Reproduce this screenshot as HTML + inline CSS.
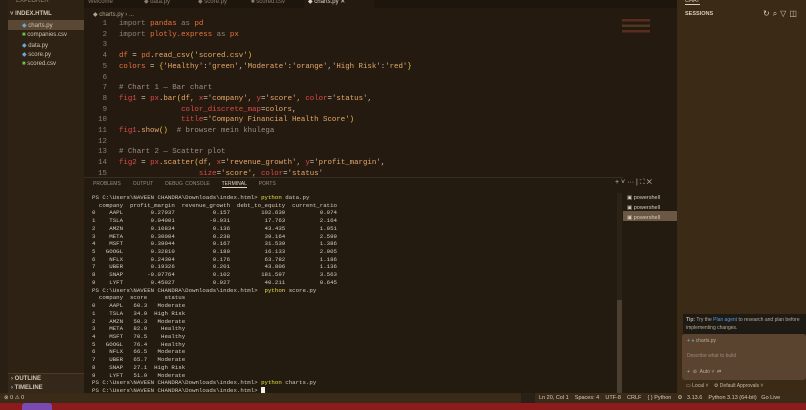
<!DOCTYPE html>
<html><head><style>
*{margin:0;padding:0;box-sizing:border-box}
body{width:806px;height:410px;overflow:hidden;background:#241a10;font-family:"Liberation Sans",sans-serif;position:relative}
.abs{position:absolute}
.mono{font-family:"Liberation Mono",monospace;white-space:pre}
#act{left:0;top:0;width:8px;height:393px;background:#2a1f13}
#side{left:8px;top:0;width:76px;height:393px;background:#2e2214;color:#cfc3b0;font-size:6px}
#side .f{position:absolute;left:14px}
#tabs{left:84px;top:0;width:593px;height:8px;background:#1e160d}
.tab{position:absolute;top:0;height:8px;font-size:6px;color:#8a7d6c;line-height:5px}
#code{left:84px;top:19px;font-size:7.4px;line-height:10.7px;color:#d4c8b4}
.ln{display:inline-block;width:23px;text-align:right;color:#8a7f70;margin-right:12px}
.k{color:#8f8474}.m{color:#e8743b}.s{color:#e6a96a}.o{color:#e04a4a}.c{color:#9b8f7f}.p{color:#f0c040}.g{color:#4ec94e}
#term{left:84px;top:177px;width:539px;height:216px;background:#231a10;border-top:1px solid #3a2d1e}
#tl{left:92px;top:194px;font-size:5.75px;line-height:7.72px;color:#d8ccb8}
.y{color:#e8e040}
#chat{left:677px;top:0;width:129px;height:393px;background:#3b2a16}
#status{left:0;top:393px;width:806px;height:10px;background:#3a2a18;color:#d8ccb8;font-size:5.5px;line-height:10px}
#task{left:0;top:403px;width:806px;height:7px;background:#8e1b1b}
</style></head><body>
<div id="act" class="abs"></div>
<div id="side" class="abs">
 <div class="abs" style="left:8px;top:-2px;color:#9a8e7c">EXPLORER</div>
 <div class="abs" style="left:2px;top:11px;font-weight:bold">˅ INDEX.HTML</div>
 <div class="abs" style="left:0;top:20px;width:76px;height:10px;background:#5a4834"></div>
 <div class="f" style="top:22px"><span style="color:#6aa6d8">◆</span> charts.py</div>
 <div class="f" style="top:32px"><span style="color:#6cc04a">■</span> companies.csv</div>
 <div class="f" style="top:42px"><span style="color:#6aa6d8">◆</span> data.py</div>
 <div class="f" style="top:51px"><span style="color:#6aa6d8">◆</span> score.py</div>
 <div class="f" style="top:61px"><span style="color:#6cc04a">■</span> scored.csv</div>
 <div class="abs" style="left:0;top:373px;width:76px;height:20px;background:#34281a;border-top:1px solid #4a3a28"></div>
 <div class="abs" style="left:3px;top:376px;font-weight:bold">› OUTLINE</div>
 <div class="abs" style="left:3px;top:385px;font-weight:bold">› TIMELINE</div>
</div>
<div id="tabs" class="abs">
 <div class="tab" style="left:4px">Welcome</div>
 <div class="tab" style="left:60px">◆ data.py</div>
 <div class="tab" style="left:114px">◆ score.py</div>
 <div class="tab" style="left:167px">■ scored.csv</div>
 <div class="abs" style="left:220px;top:0;width:70px;height:8px;background:#241a10"></div>
 <div class="tab" style="left:224px;color:#e0d4c0">◆ charts.py ✕</div>
</div>
<div class="abs" style="left:93px;top:11px;font-size:6px;color:#b0a490">◆ charts.py › ...</div>
<div id="code" class="abs mono"><span class="ln">1</span><span class="k">import</span> <span class="m">pandas</span> <span class="k">as</span> <span class="m">pd</span>
<span class="ln">2</span><span class="k">import</span> <span class="m">plotly.express</span> <span class="k">as</span> <span class="m">px</span>
<span class="ln">3</span>
<span class="ln">4</span><span class="m">df</span> = <span class="m">pd</span>.<span class="s">read_csv</span><span class="p">(</span><span class="s">'scored.csv'</span><span class="p">)</span>
<span class="ln">5</span><span class="m">colors</span> = <span class="p">{</span><span class="s">'Healthy'</span>:<span class="s">'green'</span>,<span class="s">'Moderate'</span>:<span class="s">'orange'</span>,<span class="s">'High Risk'</span>:<span class="s">'red'</span><span class="p">}</span>
<span class="ln">6</span>
<span class="ln">7</span><span class="c"># Chart 1 — Bar chart</span>
<span class="ln">8</span><span class="o">fig1</span> = <span class="o">px</span>.<span class="s">bar</span><span class="p">(</span><span class="s">df, </span><span class="o">x</span>=<span class="s">'company', </span><span class="o">y</span>=<span class="s">'score', </span><span class="o">color</span>=<span class="s">'status'</span>,
<span class="ln">9</span>              <span class="o">color_discrete_map</span>=<span class="s">colors</span>,
<span class="ln">10</span>              <span class="o">title</span>=<span class="s">'Company Financial Health Score'</span><span class="p">)</span>
<span class="ln">11</span><span class="o">fig1</span>.<span class="s">show</span><span class="p">()</span>  <span class="c"># browser mein khulega</span>
<span class="ln">12</span>
<span class="ln">13</span><span class="c"># Chart 2 — Scatter plot</span>
<span class="ln">14</span><span class="o">fig2</span> = <span class="o">px</span>.<span class="s">scatter</span><span class="p">(</span><span class="s">df, </span><span class="o">x</span>=<span class="s">'revenue_growth', </span><span class="o">y</span>=<span class="s">'profit_margin'</span>,
<span class="ln">15</span>                  <span class="o">size</span>=<span class="s">'score', </span><span class="o">color</span>=<span class="s">'status'</span></div>
<div class="abs" style="left:622px;top:19px;width:28px;height:16px;background:linear-gradient(#7a3a2a 0 15%,transparent 15% 35%,#6a4a2a 35% 50%,transparent 50% 70%,#7a3a2a 70% 85%,transparent 85%);opacity:.6"></div>
<div id="term" class="abs"></div>
<div class="abs" style="left:93px;top:181px;font-size:5px;color:#9a8e7c;word-spacing:1px">PROBLEMS &nbsp;&nbsp;&nbsp; OUTPUT &nbsp;&nbsp;&nbsp; DEBUG CONSOLE &nbsp;&nbsp;&nbsp; <span style="color:#e0d4c0;border-bottom:1px solid #e0d4c0">TERMINAL</span> &nbsp;&nbsp;&nbsp; PORTS</div>
<div class="abs" style="left:615px;top:179px;font-size:7px;color:#c8bca8">+ ˅ ··· | ⛶ ✕</div>
<div class="abs" style="left:617px;top:193px;width:5px;height:200px;background:#2c2216"></div>
<div class="abs" style="left:617px;top:300px;width:5px;height:93px;background:#4a3e30"></div>
<div class="abs" style="left:623px;top:191px;width:54px;height:202px;background:#231a10"></div>
<div class="abs" style="left:623px;top:211px;width:54px;height:10px;background:#6a5844"></div>
<div class="abs" style="left:627px;top:193px;font-size:5.5px;line-height:10px;color:#d8ccb8">▣ powershell<br>▣ powershell<br>▣ powershell</div>
<div id="tl" class="abs mono">PS C:\Users\NAVEEN CHANDRA\Downloads\index.html> <span class="y">python</span> data.py
  company  profit_margin  revenue_growth  debt_to_equity  current_ratio
0    AAPL        0.27037           0.157         102.630          0.974
1    TSLA        0.04001          -0.031          17.763          2.164
2    AMZN        0.10834           0.136          43.435          1.051
3    META        0.30084           0.238          39.164          2.599
4    MSFT        0.39044           0.167          31.539          1.386
5   GOOGL        0.32810           0.180          16.133          2.005
6    NFLX        0.24304           0.176          63.782          1.186
7    UBER        0.19326           0.201          43.806          1.136
8    SNAP       -0.07764           0.102         181.597          3.563
9    LYFT        0.45027           0.027          40.211          0.645
PS C:\Users\NAVEEN CHANDRA\Downloads\index.html>  <span class="y">python</span> score.py
  company  score     status
0    AAPL   60.3   Moderate
1    TSLA   34.9  High Risk
2    AMZN   50.3   Moderate
3    META   82.9    Healthy
4    MSFT   70.5    Healthy
5   GOOGL   76.4    Healthy
6    NFLX   66.5   Moderate
7    UBER   65.7   Moderate
8    SNAP   27.1  High Risk
9    LYFT   51.9   Moderate
PS C:\Users\NAVEEN CHANDRA\Downloads\index.html> <span class="y">python</span> charts.py
PS C:\Users\NAVEEN CHANDRA\Downloads\index.html> <span style="background:#eee">&nbsp;</span></div>
<div id="chat" class="abs">
 <div class="abs" style="left:8px;top:-2px;font-size:5.5px;color:#d8ccb8;border-bottom:1px solid #d8ccb8">CHAT</div>
 <div class="abs" style="left:8px;top:11px;font-size:5.5px;font-weight:bold;color:#d8ccb8">SESSIONS</div>
 <div class="abs" style="left:86px;top:9px;font-size:8px;color:#d8ccb8;letter-spacing:3px">↻⌕▽◫</div>
 <div class="abs" style="left:6px;top:314px;width:123px;height:20px;background:#1e1a14;font-size:5px;color:#b8ac98;padding:2px 3px;line-height:8px"><b>Tip:</b> Try the <span style="color:#5a9ae0">Plan agent</span> to research and plan before implementing changes.</div>
 <div class="abs" style="left:5px;top:334px;width:124px;height:46px;background:#5a4430;border-radius:3px;font-size:5px;color:#b8ac98">
  <div class="abs" style="left:5px;top:4px">+ <span style="color:#4aa0c8">●</span> charts.py</div>
  <div class="abs" style="left:5px;top:19px;color:#9a8c78">Describe what to build</div>
  <div class="abs" style="left:5px;top:35px">+ &nbsp;⊘ &nbsp;Auto ˅ &nbsp;⇄</div>
 </div>
 <div class="abs" style="left:9px;top:383px;font-size:5px;color:#c8bca8">▭ Local ˅ &nbsp;&nbsp; ⚙ Default Approvals ˅</div>
</div>
<div id="status" class="abs">
 <span class="abs" style="left:4px">⊗ 0 ⚠ 0</span>
 <span class="abs" style="left:521px;width:14px;height:10px;background:#2a2016"></span>
 <span class="abs" style="left:539px">Ln 20, Col 1 &nbsp;&nbsp; Spaces: 4 &nbsp;&nbsp; UTF-8 &nbsp;&nbsp; CRLF &nbsp;&nbsp; { } Python &nbsp;&nbsp; ⚙ &nbsp; 3.13.6 &nbsp;&nbsp; Python 3.13 (64-bit) &nbsp; Go Live</span>
</div>
<div id="task" class="abs">
 <div class="abs" style="left:22px;top:0;width:30px;height:7px;background:#7a4ab0;border-radius:3px 3px 0 0"></div>
</div>
</body></html>
